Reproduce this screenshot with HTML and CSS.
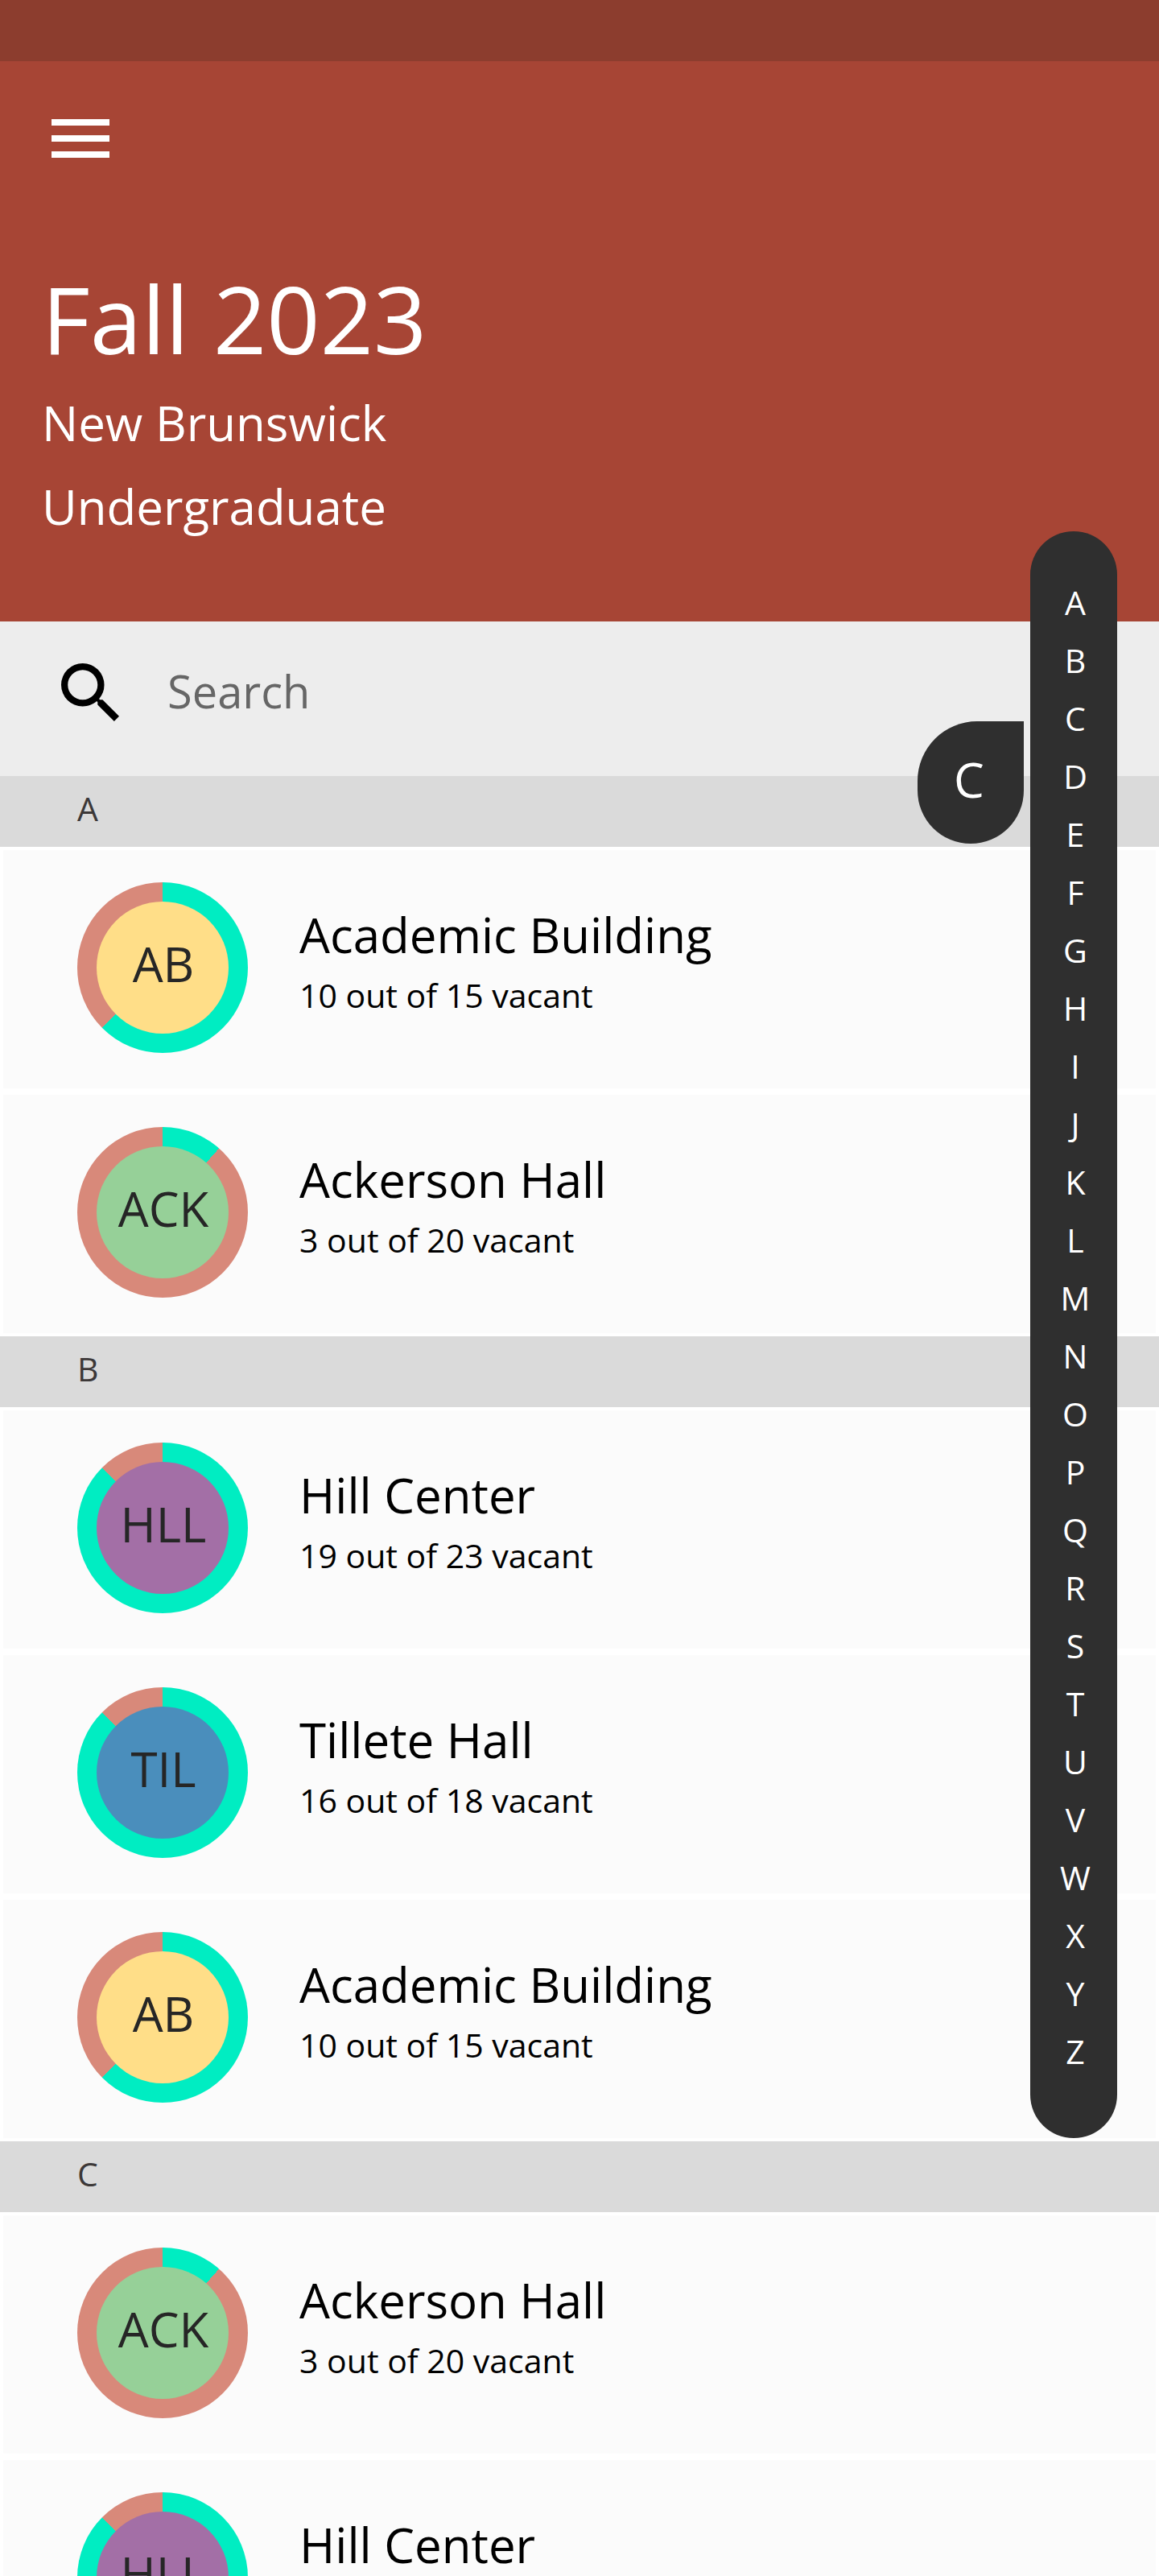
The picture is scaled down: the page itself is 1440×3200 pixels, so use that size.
FILE: index.html
```html
<!DOCTYPE html>
<html lang="en">
<head>
<meta charset="utf-8">
<meta name="viewport" content="width=device-width, initial-scale=1">
<title>Fall 2023 – Buildings</title>
<link rel="stylesheet" href="styles.css">
</head>
<body>
<div class="app">
  <div class="status-bar"></div>
  <header class="header">
    <button class="menu-button" type="button" aria-label="Open menu">
      <span class="menu-line"></span><span class="menu-line"></span><span class="menu-line"></span>
    </button>
    <h1 class="title">Fall 2023</h1>
    <p class="subtitle">New Brunswick</p>
    <p class="subtitle">Undergraduate</p>
  </header>

  <form class="search" role="search">
    <label class="search-label" for="search" aria-label="Search">
      <svg class="search-icon" viewBox="3 3 17.49 17.49" aria-hidden="true"><path d="M15.5 14h-.79l-.28-.27A6.471 6.471 0 0 0 16 9.5 6.5 6.5 0 1 0 9.5 16c1.61 0 3.09-.59 4.23-1.57l.27.28v.79l5 4.99L20.49 19l-4.99-5zm-6 0C7.01 14 5 11.99 5 9.5S7.01 5 9.5 5 14 7.01 14 9.5 11.99 14 9.5 14z"/></svg>
    </label>
    <input class="search-input" id="search" type="text" placeholder="Search">
  </form>

  <main class="list">
    <section>
      <h2 class="section-title" id="A">A</h2>
      <ul class="buildings">
        <li class="building"><div class="ring" style="--vacant: 62.5%"><span class="code yellow">AB</span></div><div class="info"><h3 class="name">Academic Building</h3><p class="vacancy">10 out of 15 vacant</p></div></li>
        <li class="building"><div class="ring" style="--vacant: 11.5%"><span class="code green">ACK</span></div><div class="info"><h3 class="name">Ackerson Hall</h3><p class="vacancy">3 out of 20 vacant</p></div></li>
      </ul>
    </section>
    <section>
      <h2 class="section-title" id="B">B</h2>
      <ul class="buildings">
        <li class="building"><div class="ring" style="--vacant: 87.5%"><span class="code purple">HLL</span></div><div class="info"><h3 class="name">Hill Center</h3><p class="vacancy">19 out of 23 vacant</p></div></li>
        <li class="building"><div class="ring" style="--vacant: 87.5%"><span class="code blue">TIL</span></div><div class="info"><h3 class="name">Tillete Hall</h3><p class="vacancy">16 out of 18 vacant</p></div></li>
        <li class="building"><div class="ring" style="--vacant: 62.5%"><span class="code yellow">AB</span></div><div class="info"><h3 class="name">Academic Building</h3><p class="vacancy">10 out of 15 vacant</p></div></li>
      </ul>
    </section>
    <section>
      <h2 class="section-title" id="C">C</h2>
      <ul class="buildings">
        <li class="building"><div class="ring" style="--vacant: 11.5%"><span class="code green">ACK</span></div><div class="info"><h3 class="name">Ackerson Hall</h3><p class="vacancy">3 out of 20 vacant</p></div></li>
        <li class="building"><div class="ring" style="--vacant: 87.5%"><span class="code purple">HLL</span></div><div class="info"><h3 class="name">Hill Center</h3><p class="vacancy">19 out of 23 vacant</p></div></li>
      </ul>
    </section>
  </main>

  <nav class="index" aria-label="Jump to letter">
    <a href="#A">A</a><a href="#B">B</a><a href="#C">C</a><a href="#D">D</a><a href="#E">E</a><a href="#F">F</a><a href="#G">G</a><a href="#H">H</a><a href="#I">I</a><a href="#J">J</a><a href="#K">K</a><a href="#L">L</a><a href="#M">M</a><a href="#N">N</a><a href="#O">O</a><a href="#P">P</a><a href="#Q">Q</a><a href="#R">R</a><a href="#S">S</a><a href="#T">T</a><a href="#U">U</a><a href="#V">V</a><a href="#W">W</a><a href="#X">X</a><a href="#Y">Y</a><a href="#Z">Z</a>
    <span class="index-bubble">C</span>
  </nav>
</div>
</body>
</html>
```
FILE: styles.css
```css
* {
  box-sizing: border-box;
  margin: 0;
  padding: 0;
}

body {
  background: #fff;
  color: #000;
  font-family: "Open Sans", "Noto Sans", sans-serif;
  font-size: 41px;
}

h1, h2, h3 {
  font-weight: 400;
}

.app {
  position: relative;
  display: flex;
  flex-direction: column;
  height: 100vh;
  overflow: hidden;
}

.status-bar {
  flex: none;
  height: 76px;
  background: #8c3d2e;
}

.header {
  flex: none;
  padding: 72px 52px 91px;
  background: #a74535;
  color: #fff;
}

.menu-button {
  display: flex;
  flex-direction: column;
  gap: 12px;
  width: 72px;
  margin: 0 0 121px 12px;
  border: 0;
  background: none;
}

.menu-line {
  height: 8px;
  background: #fff;
}

.title {
  font-size: 116px;
  line-height: 156px;
}

.subtitle {
  font-size: 60px;
  line-height: 104px;
}

.search {
  flex: none;
  display: flex;
  align-items: center;
  gap: 60px;
  padding: 52px 200px 68px 76px;
  background: #ededed;
}

.search-label,
.search-icon {
  display: block;
  width: 72px;
  height: 72px;
}

.search-input {
  flex: 1;
  min-width: 0;
  height: 72px;
  padding-bottom: 4px;
  border: 0;
  outline: 0;
  background: none;
  color: #000;
  font: inherit;
  font-size: 56px;
}

.search-input::placeholder {
  color: #666;
  opacity: 1;
}

.list {
  flex: 1;
  min-height: 0;
  overflow-y: auto;
  scrollbar-width: none;
}

.section-title {
  padding: 0 96px 8px;
  background: #dadada;
  color: #3c3838;
  font-size: 41px;
  line-height: 80px;
}

.buildings {
  list-style: none;
}

.building {
  display: flex;
  gap: 64px;
  padding: 40px 200px 44px 92px;
  border: 4px solid #fff;
  background: #fbfbfb;
}

.ring {
  flex: none;
  display: grid;
  place-items: center;
  width: 212px;
  height: 212px;
  border-radius: 50%;
  background: conic-gradient(#00edc2 var(--vacant), #d8897a 0);
}

.code {
  width: 164px;
  height: 164px;
  padding-left: 2px;
  border-radius: 50%;
  color: #262626;
  font-size: 60px;
  line-height: 154px;
  text-align: center;
}

.yellow { background: #ffde88; }
.green { background: #96d098; }
.purple { background: #a36fa6; }
.blue { background: #4a8ebc; }

.info {
  padding-top: 25px;
}

.name {
  font-size: 60px;
  line-height: 80px;
}

.vacancy {
  line-height: 70px;
}

.index {
  position: absolute;
  top: 660px;
  right: 52px;
  display: flex;
  flex-direction: column;
  width: 108px;
  padding: 52px 0 72px 4px;
  border-radius: 54px;
  background: #2f2f2f;
  color: #fff;
  text-align: center;
}

.index a {
  color: inherit;
  line-height: 72px;
  text-decoration: none;
}

.index-bubble {
  position: absolute;
  top: 236px;
  right: 116px;
  width: 132px;
  height: 152px;
  padding-right: 4px;
  border-radius: 74px 0 66px 66px;
  background: #2f2f2f;
  font-size: 60px;
  line-height: 144px;
}
```
